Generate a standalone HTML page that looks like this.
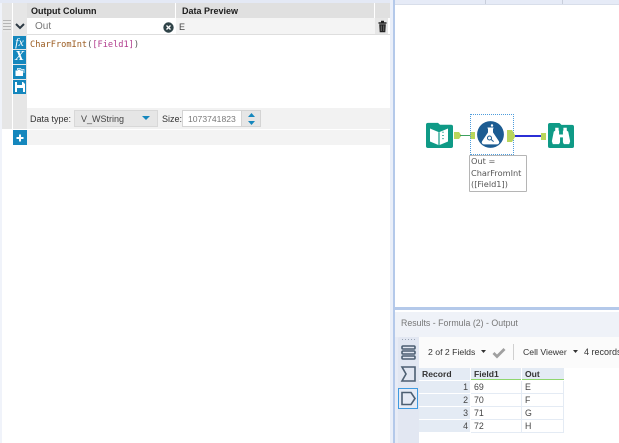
<!DOCTYPE html>
<html><head><meta charset="utf-8">
<style>
html,body{margin:0;padding:0;background:#fff}
#p{position:relative;width:619px;height:443px;overflow:hidden;background:#fff;font-family:"DejaVu Sans","Liberation Sans",sans-serif;font-size:9px;color:#333;filter:blur(.3px)}
#p div{position:absolute;box-sizing:border-box;white-space:nowrap}
#p svg{position:absolute;overflow:visible}
.t{font-family:"Liberation Sans",sans-serif;font-size:9px;line-height:12px}
.b{font-weight:bold;color:#1c1c1c}
.c{background:#fff;font-family:"Liberation Sans",sans-serif;font-size:8.8px;line-height:12px;height:12px;color:#444}
.h{background:#e4ebf4;font-family:"Liberation Sans",sans-serif;font-size:8.6px;line-height:12px;font-weight:bold;color:#333}
</style></head><body>
<div id="p">
<!-- left pane -->
<div style="left:0;top:0;width:393px;height:3px;background:#e4e9f5"></div>
<div style="left:0;top:3px;width:2px;height:440px;background:#f0f3fa"></div>
<div style="left:2px;top:3px;width:10px;height:126px;background:#e6e6e6"></div>
<div style="left:13px;top:3px;width:14px;height:126px;background:#e6e6e6"></div>
<div style="left:27px;top:3px;width:148px;height:15px;background:#e0e0e0"></div>
<div style="left:176px;top:3px;width:198px;height:15px;background:#e0e0e0"></div>
<div style="left:375px;top:3px;width:15px;height:15px;background:#e0e0e0"></div>
<div class="t b" style="left:31px;top:5px">Output Column</div>
<div class="t b" style="left:182px;top:5px">Data Preview</div>
<!-- row -->
<div style="left:3px;top:20px;width:8px;height:12px;background:repeating-linear-gradient(#b5b5b5 0,#b5b5b5 1px,#e8e8e8 1px,#e8e8e8 3px)"></div>
<svg style="left:15px;top:23px" width="10" height="7"><path d="M1 1L5 5L9 1" fill="none" stroke="#2d3a44" stroke-width="2"/></svg>
<div style="left:28px;top:18px;width:147px;height:16px;background:#fff"></div>
<div style="left:176px;top:18px;width:199px;height:16px;background:#f4f4f4"></div>
<div style="left:375px;top:18px;width:13px;height:16px;background:#e6e6e6"></div>
<div class="t" style="left:35px;top:21px;color:#777;font-size:10px">Out</div>
<svg style="left:163px;top:22px" width="11" height="11"><circle cx="5.5" cy="5.5" r="5.2" fill="#2f4348"/><path d="M3.5 3.5L7.5 7.5M7.5 3.5L3.5 7.5" stroke="#fff" stroke-width="1.3"/></svg>
<div class="t" style="left:179px;top:21px;color:#444">E</div>
<svg style="left:378px;top:20px" width="9" height="13"><path d="M3 1.5h3M0.5 3h8" stroke="#222" stroke-width="1.4"/><path d="M1.2 4.2h6.6l-.5 8h-5.6z" fill="#222"/><path d="M3.2 5.5v5.5M5.8 5.5v5.5" stroke="#888" stroke-width=".7"/></svg>
<div style="left:27px;top:34px;width:363px;height:1px;background:#dedede"></div>
<!-- editor -->
<div style="left:13px;top:36px;width:14px;height:73px;background:#e6e6e6"></div>
<div style="left:13px;top:36px;width:13px;height:13px;background:#1587bd;color:#fff;font:italic 12px/12px 'Liberation Serif',serif;text-align:center">fx</div>
<div style="left:13px;top:50px;width:13px;height:14px;background:#1587bd;color:#fff;font:italic bold 14px/14px 'Liberation Serif',serif;text-align:center">X</div>
<div style="left:13px;top:65px;width:13px;height:14px;background:#1587bd"></div>
<svg style="left:15px;top:67px" width="10" height="10"><path d="M2.5 3V1.5h3l1 1h2.5V6" fill="none" stroke="#fff" stroke-width=".8"/><path d="M0.5 3.5h2l1-1h2v1h2.5v5.5h-7.5z" fill="#fff"/></svg>
<div style="left:13px;top:80px;width:13px;height:14px;background:#1587bd"></div>
<svg style="left:15px;top:82px" width="10" height="10"><path d="M0 0h8l2 2v8H0z" fill="#fff"/><path d="M2 0h5v3H2zM2 6h6v4H2z" fill="#1587bd"/></svg>
<div style="left:30px;top:39px;font-family:'DejaVu Sans Mono','Liberation Mono',monospace;font-size:8.65px;line-height:13px;color:#9a5a1e">CharFromInt<span style="color:#555">(</span><span style="color:#b03a8c">[Field1]</span><span style="color:#555">)</span></div>
<!-- footer -->
<div style="left:27px;top:108px;width:363px;height:21px;background:#f2f2f2"></div>
<div style="left:2px;top:129px;width:388px;height:1px;background:#fff"></div>
<div class="t" style="left:30px;top:113px;color:#333">Data type:</div>
<div style="left:74px;top:110px;width:84px;height:17px;background:#e6e6e6;border:1px solid #d8d8d8"></div>
<div class="t" style="left:81px;top:113px;color:#444">V_WString</div>
<svg style="left:142px;top:116px" width="9" height="5"><path d="M0 0H8L4 4z" fill="#1587bd"/></svg>
<div class="t" style="left:162px;top:113px;color:#333">Size:</div>
<div style="left:182px;top:110px;width:79px;height:17px;background:#fff;border:1px solid #d4d4d4"></div>
<div class="t" style="left:188px;top:113px;color:#777;font-size:8.6px">1073741823</div>
<div style="left:241px;top:110px;width:20px;height:17px;background:#e6e6e6;border:1px solid #d4d4d4"></div>
<svg style="left:248px;top:112px" width="10" height="14"><path d="M0 5L3.5 1L7 5z" fill="#1587bd"/><path d="M0 9H7L3.5 13z" fill="#1587bd"/></svg>
<!-- plus row -->
<div style="left:13px;top:130px;width:377px;height:15px;background:#f3f3f3"></div>
<div style="left:13px;top:130px;width:14px;height:15px;background:#1587bd"></div>
<svg style="left:16px;top:134px" width="8" height="8"><path d="M4 .5v7M.5 4h7" stroke="#fff" stroke-width="2"/></svg>
<!-- divider -->
<div style="left:390px;top:0;width:3px;height:443px;background:#eaeff9"></div>
<div style="left:393px;top:0;width:2px;height:443px;background:#b4c9ea"></div>
<!-- canvas top -->
<div style="left:395px;top:0;width:224px;height:5px;background:#e6ebf7;border-bottom:1px solid #d8deea"></div>
<div style="left:485px;top:0;width:1px;height:4px;background:#c8cedb"></div>
<div style="left:562px;top:0;width:1px;height:4px;background:#c8cedb"></div>
<!-- input tool -->
<svg style="left:426px;top:122px" width="27" height="26" viewBox="0 0 27 28" preserveAspectRatio="none">
<path d="M2 1h10l2 2h11a2 2 0 0 1 2 2v21a2 2 0 0 1-2 2H2a2 2 0 0 1-2-2V3a2 2 0 0 1 2-2z" fill="#0f9a86"/>
<path d="M4 7l9 4 9-4v14l-9 4-9-4z" fill="#fff"/>
<path d="M13 11v14" stroke="#0f9a86" stroke-width="1.2"/>
<path d="M17 10.5v1M17 14v1M17 17.5v1" stroke="#0f9a86" stroke-width="1.6"/>
</svg>
<!-- connectors -->
<div style="left:454px;top:132px;width:5px;height:7px;background:#b9d65c"></div>
<svg style="left:459px;top:132px" width="3" height="7"><path d="M0 0L2.5 3.5L0 7z" fill="#b9d65c"/></svg>
<div style="left:460px;top:135px;width:11px;height:1px;background:#3ea060"></div>
<div style="left:470px;top:132px;width:5px;height:7px;background:#b9d65c"></div>
<!-- formula tool -->
<div style="left:470px;top:114px;width:44px;height:41px;border:1px dotted #4d9cdc"></div>
<svg style="left:477px;top:121px" width="27" height="27">
<circle cx="13.5" cy="13.5" r="13.4" fill="#1c5c92"/>
<path d="M10.5 7h6M11.5 7.5v4L5.5 20.5a1.6 1.6 0 0 0 1.4 2.4h13.2a1.6 1.6 0 0 0 1.4-2.4L15.5 11.5v-4" fill="#fff" stroke="#fff" stroke-width="1"/>
<circle cx="12.5" cy="17" r="2" fill="none" stroke="#1c5c92" stroke-width="1"/>
<path d="M14 18.4l2.6 2.2" stroke="#1c5c92" stroke-width="1"/>
<circle cx="15" cy="4.5" r="1.2" fill="#fff"/>
</svg>
<svg style="left:507px;top:130px" width="10" height="13"><path d="M0 0H5L8.5 6L5 12H0z" fill="#b9d65c"/></svg>
<div style="left:515px;top:135px;width:27px;height:1.5px;background:#2b2fd6"></div>
<div style="left:541px;top:133px;width:5px;height:7px;background:#b9d65c"></div>
<!-- browse tool -->
<svg style="left:548px;top:122px" width="26" height="26" viewBox="0 0 27 27" preserveAspectRatio="none">
<path d="M2 1h10l2 2h11a2 2 0 0 1 2 2v20a2 2 0 0 1-2 2H2a2 2 0 0 1-2-2V3a2 2 0 0 1 2-2z" fill="#0f9a86"/>
<path d="M7.5 6h3.5v3h.5v4h4V9h.5V6h3.5v3l1.500 1 2 10-1 3h-5.500l-1-2v-5h-3v5l-1 2H5l-1-3 2-10 1.500-1z" fill="#fff"/>
</svg>
<!-- annotation -->
<div style="left:469px;top:155px;width:58px;height:37px;background:#fff;border:1px solid #b5b5b5;border-radius:1px"></div>
<div style="left:471px;top:156px;font-family:'DejaVu Sans','Liberation Sans',sans-serif;font-size:8.2px;line-height:11.5px;color:#555">Out =<br>CharFromInt<br>([Field1])</div>
<!-- results -->
<div style="left:395px;top:307px;width:224px;height:3px;background:#b4c9ea"></div>
<div style="left:395px;top:310px;width:224px;height:2px;background:#fff"></div>
<div style="left:395px;top:312px;width:224px;height:25px;background:#eff2f8"></div>
<div class="t" style="left:401px;top:317px;color:#777;font-size:8.8px">Results - Formula (2) - Output</div>
<div style="left:395px;top:337px;width:4px;height:106px;background:#e8ecf6"></div>
<div style="left:398px;top:337px;width:21px;height:106px;background:#e2e7f2;border-radius:2px 0 0 0"></div>
<div style="left:402px;top:339px;width:15px;height:1px;background:repeating-linear-gradient(90deg,#9aa5b5 0,#9aa5b5 1px,transparent 1px,transparent 3px)"></div>
<svg style="left:401px;top:345px" width="15" height="15"><g fill="none" stroke="#4d5f72" stroke-width="1.6"><rect x="1" y="1" width="13" height="3" rx="1"/><rect x="1" y="6" width="13" height="3" rx="1"/><rect x="1" y="11" width="13" height="3" rx="1"/></g></svg>
<svg style="left:401px;top:366px" width="15" height="16"><path d="M1 1H14V15H1L5 8z" fill="none" stroke="#4d5f72" stroke-width="1.6"/></svg>
<div style="left:398px;top:388px;width:20px;height:21px;border:1px solid #3f9ae0;background:#e6ebf5"></div>
<svg style="left:401px;top:391px" width="15" height="15"><path d="M1 1.5H10L14 7.5L10 13.5H1z" fill="none" stroke="#4d5f72" stroke-width="1.6"/></svg>
<!-- toolbar -->
<div style="left:419px;top:337px;width:200px;height:31px;background:#fbfbfb"></div>
<div class="t" style="left:428px;top:346px;color:#333;font-size:8.7px">2 of 2 Fields</div>
<svg style="left:481px;top:350px" width="6" height="4"><path d="M0 0H5L2.5 3z" fill="#333"/></svg>
<svg style="left:492px;top:347px" width="14" height="11"><path d="M1.5 6L5 9.5L12.5 2" fill="none" stroke="#a0a0a0" stroke-width="2.8"/></svg>
<div style="left:513px;top:344px;width:1px;height:16px;background:#d0d0d0"></div>
<div class="t" style="left:523px;top:346px;color:#333;font-size:8.7px">Cell Viewer</div>
<svg style="left:573px;top:350px" width="6" height="4"><path d="M0 0H5L2.5 3z" fill="#333"/></svg>
<div class="t" style="left:584px;top:346px;color:#333">4 records</div>
<!-- table -->
<div class="h" style="left:419px;top:368px;width:51px;height:12px;padding-left:3px">Record</div>
<div class="h" style="left:471px;top:368px;width:50px;height:12px;padding-left:3px;border-bottom:1px solid #8fd66e">Field1</div>
<div class="h" style="left:522px;top:368px;width:42px;height:12px;padding-left:3px;border-bottom:1px solid #8fd66e">Out</div>

<div class="c" style="left:419px;top:381px;width:51px;background:#e4ebf4;text-align:right;padding-right:2px">1</div>
<div class="c" style="left:471px;top:381px;width:50px;padding-left:3px">69</div>
<div class="c" style="left:522px;top:381px;width:42px;padding-left:3px">E</div>
<div class="c" style="left:419px;top:394px;width:51px;background:#e4ebf4;text-align:right;padding-right:2px">2</div>
<div class="c" style="left:471px;top:394px;width:50px;padding-left:3px">70</div>
<div class="c" style="left:522px;top:394px;width:42px;padding-left:3px">F</div>
<div class="c" style="left:419px;top:407px;width:51px;background:#e4ebf4;text-align:right;padding-right:2px">3</div>
<div class="c" style="left:471px;top:407px;width:50px;padding-left:3px">71</div>
<div class="c" style="left:522px;top:407px;width:42px;padding-left:3px">G</div>
<div class="c" style="left:419px;top:420px;width:51px;background:#e4ebf4;text-align:right;padding-right:2px">4</div>
<div class="c" style="left:471px;top:420px;width:50px;padding-left:3px">72</div>
<div class="c" style="left:522px;top:420px;width:42px;padding-left:3px">H</div>
<!-- table grid lines -->
<div style="left:471px;top:393px;width:93px;height:1px;background:#e4ebf4"></div>
<div style="left:471px;top:406px;width:93px;height:1px;background:#e4ebf4"></div>
<div style="left:471px;top:419px;width:93px;height:1px;background:#e4ebf4"></div>
<div style="left:471px;top:432px;width:93px;height:1px;background:#e4ebf4"></div>
<div style="left:521px;top:381px;width:1px;height:52px;background:#e4ebf4"></div>
<div style="left:563px;top:381px;width:1px;height:52px;background:#e4ebf4"></div>
</div>
</body></html>
